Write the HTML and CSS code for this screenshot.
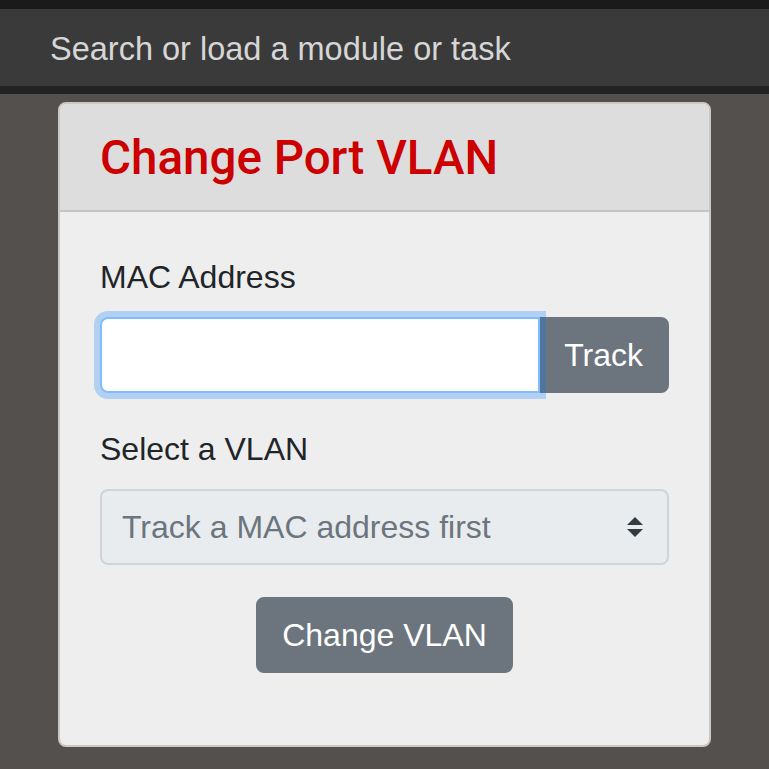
FILE: index.html
```html
<!DOCTYPE html>
<html lang="en">
<head>
    <meta charset="UTF-8">
    <meta name="viewport" content="width=device-width, initial-scale=1.0">
    <title>Change Port VLAN</title>
    <link rel="stylesheet" href="styles.css">
</head>
<body>
    <div class="topbar"></div>
    <div class="searchbar">
        <input type="text" class="search" placeholder="Search or load a module or task">
    </div>
    <div class="strip"></div>
    <div class="page">
        <div class="card">
            <div class="card-header">
                <h4>Change Port VLAN</h4>
            </div>
            <div class="card-body">
                <form onsubmit="return false">
                    <div class="form-group">
                        <label for="mac">MAC Address</label>
                        <div class="input-group">
                            <input type="text" id="mac" class="form-control focused">
                            <button type="button" class="btn btn-append">Track</button>
                        </div>
                    </div>
                    <div class="form-group">
                        <label for="vlan">Select a VLAN</label>
                        <div class="select">
                            <span class="select-text">Track a MAC address first</span>
                            <svg class="select-arrows" width="16" height="20" viewBox="0 0 4 5">
                                <path d="M2 0L0 2h4zm0 5L0 3h4z" fill="#343a40"/>
                            </svg>
                        </div>
                    </div>
                    <div class="form-group center">
                        <button type="submit" class="btn">Change VLAN</button>
                    </div>
                </form>
            </div>
        </div>
    </div>
</body>
</html>
```

FILE: styles.css
```css
* {
    margin: 0;
    padding: 0;
    box-sizing: border-box;
}
body {
    font-family: 'Liberation Sans', Arial, sans-serif;
    background-color: #54504e;
    color: #212529;
    height: 100vh;
    overflow: hidden;
}
.topbar {
    height: 9px;
    background-color: #1a1a1a;
}
.searchbar {
    height: 77px;
    background-color: #3a3a3a;
    display: flex;
    align-items: center;
    padding: 4px 50px 0;
}
.search {
    width: 100%;
    background: transparent;
    border: none;
    outline: none;
    font-family: inherit;
    font-size: 32.5px;
    color: #d6d6d6;
}
.search::placeholder {
    color: #d6d6d6;
}
.strip {
    height: 8px;
    background-color: #222;
}
.page {
    padding: 8px 58px 0;
}
.card {
    background-color: #eeeeee;
    border: 2px solid #c9c8c7;
    border-radius: 8px;
    overflow: hidden;
}
.card-header {
    background-color: #dddddd;
    border-bottom: 2px solid #c4c4c4;
    padding: 26px 40px 23px;
}
.card-header h4 {
    font-family: Roboto, 'Liberation Sans', sans-serif;
    font-size: 47.5px;
    line-height: 57px;
    font-weight: 500;
    color: #cc0000;
}
.card-body {
    padding: 41px 40px 40px;
}
.form-group {
    margin-bottom: 32px;
}
.form-group.center {
    text-align: center;
}
label {
    display: block;
    font-size: 32px;
    line-height: 48px;
    margin-bottom: 16px;
}
.input-group {
    display: flex;
}
.form-control {
    flex: 1;
    width: 0;
    min-width: 0;
    height: 76px;
    border: 2px solid #80bdff;
    border-radius: 8px 0 0 8px;
    background-color: #fff;
    font-size: 32px;
    padding: 12px 24px;
    outline: none;
}
.form-control.focused {
    box-shadow: 0 0 0 6px rgba(0, 123, 255, 0.25);
    position: relative;
    z-index: 1;
}
.btn {
    height: 76px;
    padding: 12px 24px;
    background-color: #6c757d;
    border: 2px solid #6c757d;
    color: #fff;
    font-family: inherit;
    font-size: 32px;
    line-height: 48px;
    border-radius: 8px;
    cursor: pointer;
}
.btn-append {
    border-radius: 0 8px 8px 0;
    margin-left: -2px;
}
.select {
    height: 76px;
    display: flex;
    align-items: center;
    justify-content: space-between;
    padding: 0 24px 0 20px;
    background-color: #e9ecef;
    border: 2px solid #ced4da;
    border-radius: 8px;
}
.select-text {
    font-size: 32px;
    color: #6c757d;
}
```
